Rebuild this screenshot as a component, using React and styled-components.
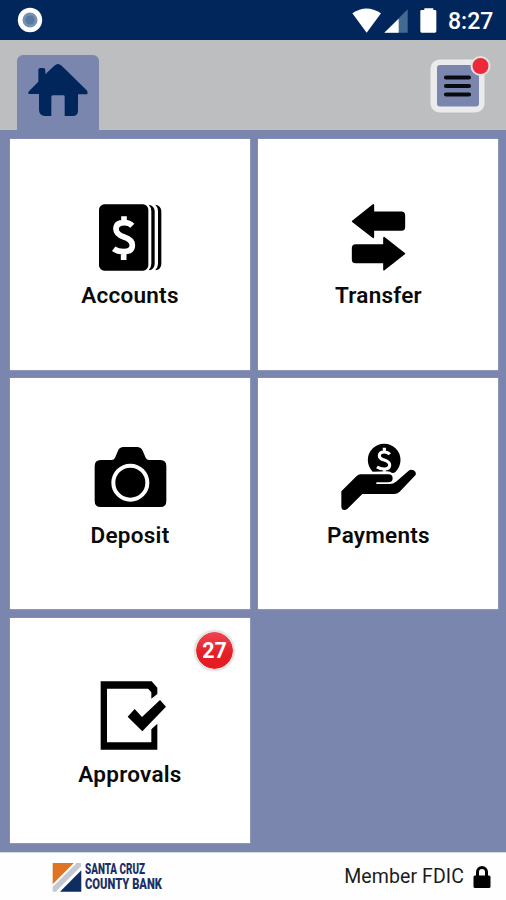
import React from 'react';
import styled, { createGlobalStyle } from 'styled-components';

const GlobalStyle = createGlobalStyle`
  * {
    box-sizing: border-box;
  }
  body {
    margin: 0;
    background: #7b86af;
    font-family: Roboto, "Liberation Sans", sans-serif;
  }
`;

const Screen = styled.div`
  width: 506px;
  height: 900px;
  display: flex;
  flex-direction: column;
  overflow: hidden;
  background: #7b86af;
`;

const StatusBar = styled.div`
  height: 39.5px;
  flex: none;
  display: flex;
  align-items: center;
  justify-content: space-between;
  padding: 1px 12px 0 17px;
  background: #00265b;
`;

const StatusIcons = styled.div`
  display: flex;
  align-items: center;
`;

const Clock = styled.span`
  width: 46px;
  margin-left: 11px;
  padding-top: 3px;
  color: #fff;
  font-size: 23px;
  font-weight: 500;
  line-height: 28px;
  white-space: nowrap;
`;

const Header = styled.div`
  height: 90.8px;
  flex: none;
  display: flex;
  justify-content: space-between;
  padding: 15.5px 14px 0 17px;
  background: #bcbec0;
`;

const HomeTab = styled.div`
  width: 82px;
  height: 75.3px;
  border-radius: 6px 6px 0 0;
  background: #7b86af;
`;

const Grid = styled.div`
  flex: none;
  display: grid;
  grid-template-columns: 240px 240px;
  grid-template-rows: 231px 231px 225px;
  gap: 8.5px;
  padding: 8.4px 9.5px 9.3px;
`;

const Tile = styled.div`
  position: relative;
  display: flex;
  flex-direction: column;
  align-items: center;
  padding-top: 51.5px;
  background: #fff;
  box-shadow: 0 0 1.5px 0.5px #b3b8ca;
`;

const TileIcon = styled.svg`
  width: 120px;
  height: 90px;
  flex: none;
  display: block;
`;

const TileLabel = styled.span`
  margin-top: 0.9px;
  padding-left: 1px;
  color: #0a0a0a;
  font-size: 22.5px;
  font-weight: 600;
  line-height: 28px;
  letter-spacing: 0.25px;
`;

const Badge = styled.div`
  position: absolute;
  top: 12.5px;
  right: 14.5px;
  width: 41px;
  height: 41px;
  border: 2px solid #e4e4e4;
  border-radius: 50%;
  background: linear-gradient(#f04450, #e41e25 60%, #e61c22) padding-box;
  box-shadow: 0 0 2px #ddd;
  color: #fff;
  font-size: 21.5px;
  font-weight: 700;
  line-height: 38px;
  text-align: center;
`;

const Footer = styled.div`
  flex: 1;
  display: flex;
  align-items: center;
  justify-content: space-between;
  padding: 2px 15px 0 52px;
  background: #fdfefd;
  border-top: 1px solid #d4d9dc;
`;

const Brand = styled.div`
  display: flex;
  align-items: center;
`;

const BrandName = styled.svg`
  width: 84px;
  height: 34px;
  margin-left: 3px;
  overflow: visible;
  font-family: Roboto, sans-serif;
  font-size: 14px;
  font-weight: 900;
  fill: #1c2f66;
`;

const Member = styled.div`
  display: flex;
  align-items: center;
  color: #1c1c1c;
  font-size: 19.5px;
  line-height: 26px;
  letter-spacing: 0.1px;

  svg {
    margin-left: 9px;
  }
`;

const AccountsIcon = () => (
  <TileIcon viewBox="0 0 360 270">
    <rect x="87" y="43" width="148" height="199" rx="16" />
    <path d="M236 44Q254 47 254 64V221Q254 238 236 241Q244 232 244 221V64Q244 52 236 44Z" />
    <path d="M256 44Q274 47 274 64V221Q274 238 256 241Q264 232 264 221V64Q264 52 256 44Z" />
    <path
      d="M187 107Q178 98 163 98Q138 98 138 117Q138 133 162 141Q187 149 187 166Q187 185 161 185Q143 185 131 176M162 79V100M161 185V210"
      fill="none"
      stroke="#fff"
      strokeWidth="17"
    />
  </TileIcon>
);

const TransferIcon = () => (
  <TileIcon viewBox="-6 0 360 270">
    <g strokeLinejoin="round" stroke="#000" strokeWidth="5">
      <path d="M98 94L160 45V67H244Q253 67 253 76V112Q253 120 244 120H160V142Z" />
      <path d="M253 191L192 143V165H107Q98 165 98 174V209Q98 217 107 217H192V239Z" />
    </g>
  </TileIcon>
);

const DepositIcon = () => (
  <TileIcon viewBox="0 0 360 270">
    <path d="M92 90H125Q132 90 135 83L144 62Q148 51 161 51H201Q213 51 218 62L227 83Q230 90 237 90H271Q289 90 289 108V213Q289 231 271 231H92Q74 231 74 213V108Q74 90 92 90Z" />
    <circle cx="181" cy="158" r="51" fill="none" stroke="#fff" strokeWidth="12" />
  </TileIcon>
);

const PaymentsIcon = () => (
  <TileIcon viewBox="-6 0 360 270">
    <path d="M158 125A49 49 0 1 1 227 125Q224 129 216 129Q212 124 202 124Z" />
    <path
      d="M209 73Q204 66 193 66Q178 66 178 77Q178 86 193 90Q209 95 209 105Q209 117 193 117Q180 117 171 111M193 53V66M193 117V125"
      fill="none"
      stroke="#fff"
      strokeWidth="9.500"
    />
    <path d="M64 184L110 138Q115 133 122 133H205Q218 133 218 145Q218 157 205 157H169V162H208Q221 162 228 155L266 122Q273 117 281 121Q291 127 286 136L239 185Q232 192 222 192H127L84 235Q79 241 72 240Q64 239 64 229Z" />
  </TileIcon>
);

const ApprovalsIcon = () => (
  <TileIcon viewBox="0 0 360 270">
    <path d="M92 37H245L262 56V75L244 89V70L234 59H111V220H244V181L262 164V242H92Z" />
    <path d="M173 143L194 120L216 144L270 93L288 113L217 187Z" />
  </TileIcon>
);

const HomeIcon = () => (
  <svg width="82" height="75" viewBox="51 165 246 225">
    <path
      d="M117 282H86Q82 278 88 272L115 245V210Q115 204 121 204H130Q136 204 136 210V223L163 197Q174 187 185 197L260 271Q266 278 262 283H234V332Q234 348 218 348H194V290Q194 286 190 286H159Q154 286 154 291V348H133Q117 345 117 330Z"
      fill="#00265b"
    />
  </svg>
);

const MenuIcon = () => (
  <svg width="66" height="62" viewBox="0 0 66 62">
    <rect x="4.500" y="4.500" width="54" height="53" rx="9" fill="#ebebeb" />
    <rect x="11" y="10" width="42" height="41.500" rx="3" fill="#7b86af" />
    <g stroke="#080a10" strokeWidth="4.200" strokeLinecap="round">
      <path d="M20 22.500H43M20 31H43M20 39.500H43" />
    </g>
    <circle cx="54.500" cy="11" r="9" fill="#ed2a39" stroke="#e2e2e4" strokeWidth="2" />
  </svg>
);

const tiles = [
  { label: 'Accounts', Icon: AccountsIcon },
  { label: 'Transfer', Icon: TransferIcon },
  { label: 'Deposit', Icon: DepositIcon },
  { label: 'Payments', Icon: PaymentsIcon },
  { label: 'Approvals', Icon: ApprovalsIcon, badge: 27 },
];

const App = () => (
  <Screen>
    <GlobalStyle />
    <StatusBar>
      <svg width="26" height="26" viewBox="0 0 26 26">
        <circle cx="13" cy="13" r="12.200" fill="#fff" />
        <circle cx="13" cy="13" r="7.500" fill="#7591b0" />
        <circle cx="13" cy="13" r="4.500" fill="#5579a1" />
      </svg>
      <StatusIcons>
        <svg width="86" height="26" viewBox="0 0 258 78">
          <path d="M4 19Q46-10 90 19L47 77Z" fill="#fff" />
          <path d="M170 7V77H142L100 77Z" fill="#446a92" />
          <path d="M143 35V77H100Z" fill="#fff" />
          <path d="M211 9H220V4H247V9H252Q256 9 256 13V73Q256 77 252 77H212Q208 77 208 73V13Q208 9 211 9Z" fill="#fff" />
        </svg>
        <Clock>8:27</Clock>
      </StatusIcons>
    </StatusBar>
    <Header>
      <HomeTab>
        <HomeIcon />
      </HomeTab>
      <MenuIcon />
    </Header>
    <Grid>
      {tiles.map(({ label, Icon, badge }) => (
        <Tile key={label}>
          <Icon />
          <TileLabel>{label}</TileLabel>
          {badge && <Badge>{badge}</Badge>}
        </Tile>
      ))}
    </Grid>
    <Footer>
      <Brand>
        <svg width="30" height="31" viewBox="0 0 90 93">
          <path d="M2 3H68L2 68Z" fill="#de7424" />
          <path d="M72 3H87V18L17 89H2V73Z" fill="#c3c8d2" />
          <path d="M70 3L2 71M87 17L15 89" stroke="#fff" strokeWidth="6" />
          <path d="M88 25V89H24Z" fill="#102d62" />
        </svg>
        <BrandName>
          <text x="0" y="13.5" textLength="60" lengthAdjust="spacingAndGlyphs">SANTA CRUZ</text>
          <text x="0" y="29" textLength="77" lengthAdjust="spacingAndGlyphs">COUNTY BANK</text>
        </BrandName>
      </Brand>
      <Member>
        Member FDIC
        <svg width="18" height="24" viewBox="0 0 18 24">
          <path d="M4.500 12V7A4.500 4.500 0 0 1 13.500 7V12" fill="none" stroke="#000" strokeWidth="3" />
          <rect x="0.500" y="10.500" width="17" height="12.500" rx="1.500" />
        </svg>
      </Member>
    </Footer>
  </Screen>
);

export default App;
